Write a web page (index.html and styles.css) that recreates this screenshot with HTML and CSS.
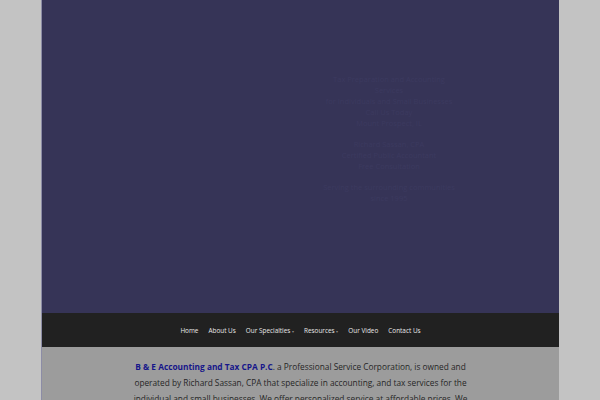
FILE: index.html
```html
<!DOCTYPE html>
<html>
<head>
<meta charset="utf-8">
<link rel="stylesheet" href="styles.css">
</head>
<body>
<div class="page">
  <header class="hero">
    <div class="hero-text">
      <p>Tax Preparation and Accounting Services</p>
      <p>for Individuals and Small Businesses</p>
      <p>Call Us Today</p>
      <p>Mount Prospect, IL</p>
      <p class="gap">Richard Sassan, CPA</p>
      <p>Certified Public Accountant</p>
      <p>Free Consultation</p>
      <p class="gap">Serving the surrounding communities since 1995</p>
    </div>
  </header>
  <nav class="nav">
    <a>Home</a>
    <a>About Us</a>
    <a>Our Specialties <span class="caret">&#9662;</span></a>
    <a>Resources <span class="caret">&#9662;</span></a>
    <a>Our Video</a>
    <a>Contact Us</a>
  </nav>
  <main class="content">
    <p><strong class="brand">B &amp; E Accounting and Tax CPA P.C</strong>. a Professional Service Corporation, is owned and operated by Richard Sassan, CPA that specialize in accounting, and tax services for the individual and small businesses. We offer personalized service at affordable prices. We are located in Mount Prospect and service the surrounding communities. We will</p>
  </main>
</div>
</body>
</html>
```

FILE: styles.css
```css
html, body {
  margin: 0;
  padding: 0;
  background: #c3c3c3;
  height: 100%;
  overflow: hidden;
}
.page {
  width: 518px;
  margin: 0 auto;
  font-family: "Open Sans", "Liberation Sans", sans-serif;
  border-left: 1px solid #8c8ca6;
  box-sizing: border-box;
}
.hero {
  height: 313px;
  background: #363457;
  display: flex;
  justify-content: flex-end;
}
.hero-text {
  width: 140px;
  margin-right: 100px;
  padding-top: 74px;
  text-align: center;
  color: #3c3a5f;
  font-size: 7.5px;
  line-height: 11px;
}
.hero-text p { margin: 0; }
.hero-text .gap { margin-top: 10px; }
.nav {
  height: 34px;
  background: #212121;
  display: flex;
  justify-content: center;
  align-items: center;
  gap: 10px;
}
.nav a {
  color: #e8e8e8;
  font-size: 6.4px;
  white-space: nowrap;
}
.caret {
  font-size: 4px;
  color: #888;
  vertical-align: middle;
}
.content {
  background: #9c9c9c;
  padding: 12px 90px 10px 90px;
  height: 60px;
}
.content p {
  margin: 0;
  text-align: center;
  font-size: 8.3px;
  line-height: 16px;
  color: #262626;
}
.brand {
  color: #16168a;
  font-weight: 700;
}
```
